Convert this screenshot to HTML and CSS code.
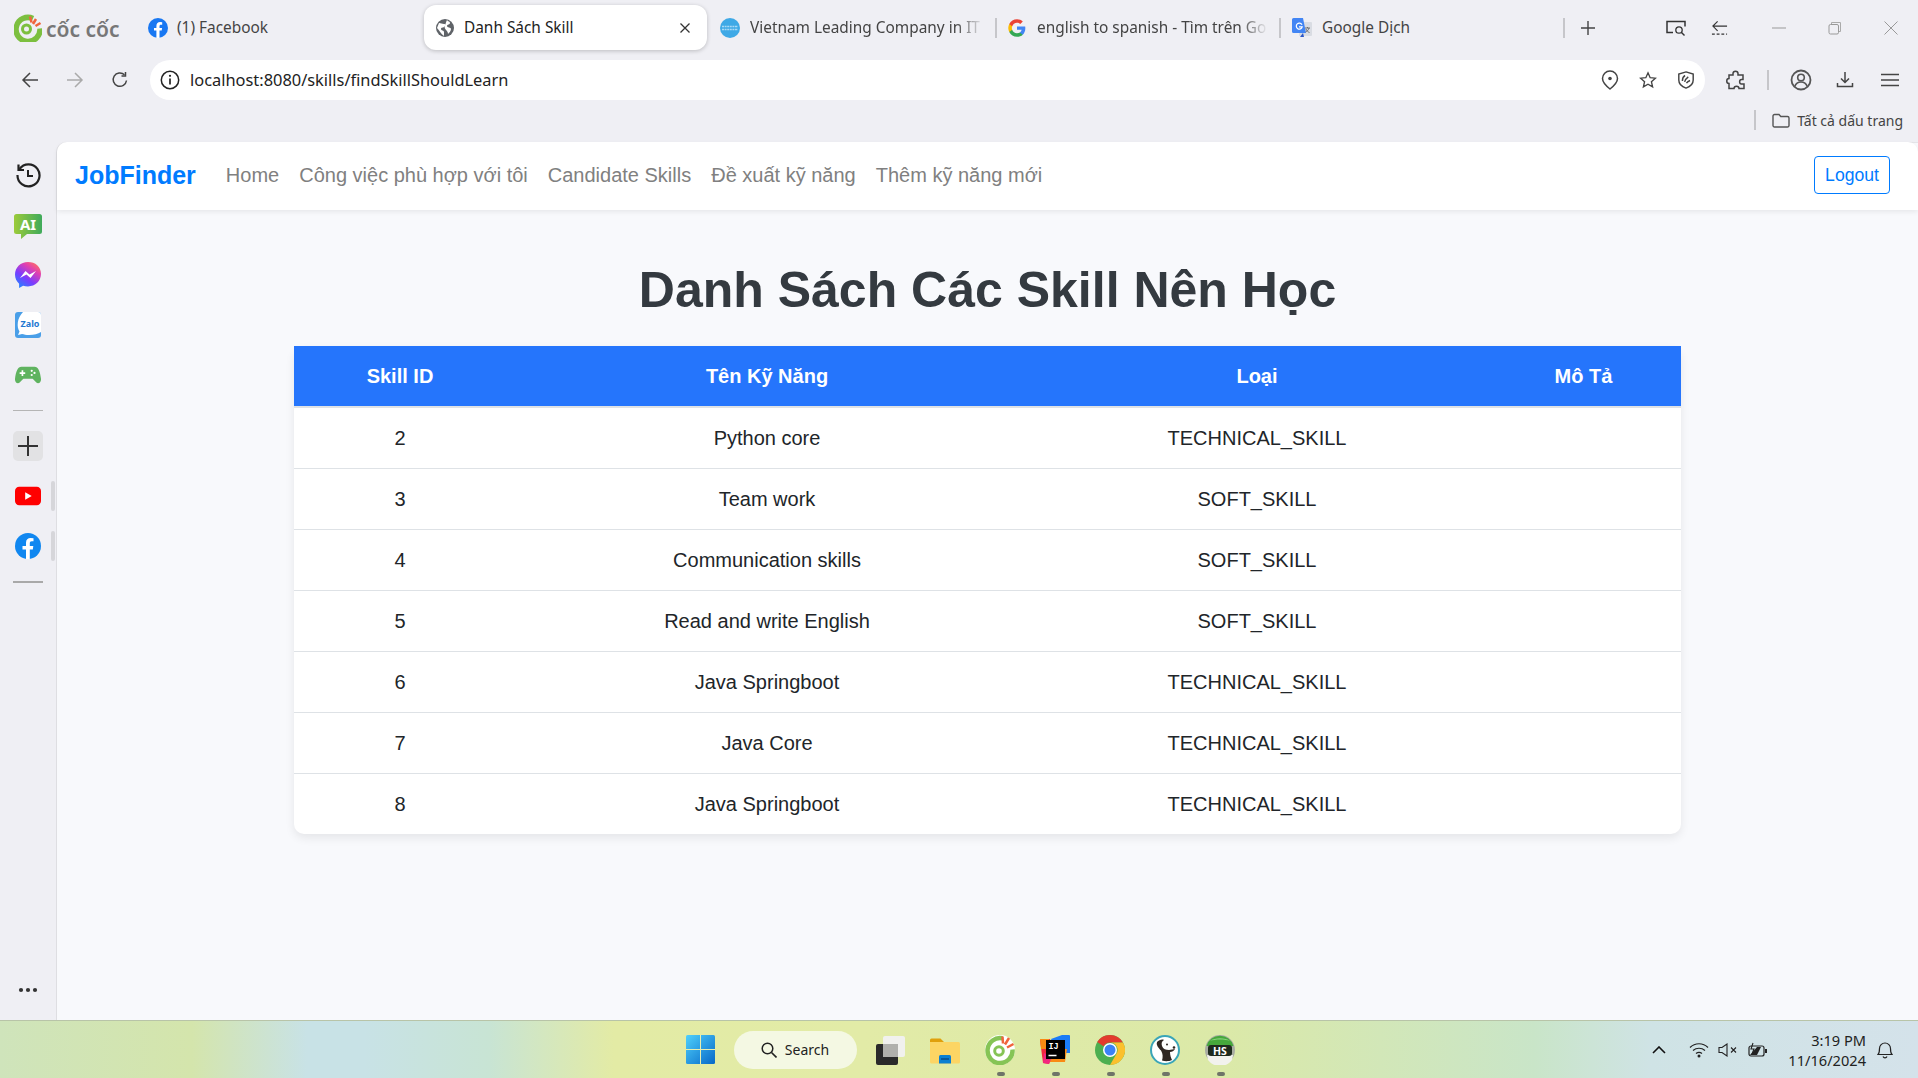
FILE: index.html
```html
<!DOCTYPE html>
<html lang="vi">
<head>
<meta charset="utf-8">
<title>Danh Sách Skill</title>
<link rel="stylesheet" href="styles.css">
</head>
<body>
<div class="screen">
  <header class="tabstrip">
    <div class="brandlogo">
      <svg class="logo-mark" viewBox="0 0 28 28"><path d="M19 4.500A12 12 0 1 0 26 14.500" fill="none" stroke="#7cbf3f" stroke-width="5.500"/><circle cx="12.500" cy="15" r="4" fill="none" stroke="#7cbf3f" stroke-width="3"/><path d="M16 2.500l1.500 6M22 5l-3 5M26.500 9l-5 3" stroke="#f0643c" stroke-width="2.500" fill="none"/></svg>
      <span class="logo-text">cốc cốc</span>
    </div>
    <div class="tab tab-first">
      <svg class="favicon" viewBox="0 0 20 20"><circle cx="10" cy="10" r="10" fill="#1877f2"/><path d="M8.400 20v-7.400H6V10h2.400V7.900c0-2.500 1.500-3.800 3.700-3.800l2.100.2v2.400h-1.200c-1.200 0-1.500.7-1.500 1.500V10h2.600l-.4 2.600h-2.200V20z" fill="#fff"/></svg>
      <span class="tab-title">(1) Facebook</span>
    </div>
    <div class="tab tab-active">
      <svg class="favicon" viewBox="0 0 20 20"><circle cx="10" cy="10" r="9" fill="#5f6368"/><path d="M4 5c2 0 3 1 5 1s1 2 0 3-3 0-3 2 3 1 3 3 0 3 0 4C6 16 4 12 2 10zM12 2c1 2 3 1 3 3s-3 1-3 3 4 1 4 3-2 4-3 5c0-2-1-3-2-4s-2-3-1-5 1-3 2-5z" fill="#fff"/></svg>
      <span class="tab-title">Danh Sách Skill</span>
      <svg class="tab-close" viewBox="0 0 12 12"><path d="M1.500 1.500l9 9M10.500 1.500l-9 9" stroke="#333" stroke-width="1.300"/></svg>
    </div>
    <div class="tab tab-vn">
      <svg class="favicon" viewBox="0 0 20 20"><circle cx="10" cy="10" r="10" fill="#3fa9e6"/><path d="M2 8.500h16M2 11.500h16" stroke="#a9d9f5" stroke-width="1.500" stroke-dasharray="2 .6"/></svg>
      <span class="tab-title tab-fade">Vietnam Leading Company in IT</span>
    </div>
    <i class="tab-sep"></i>
    <div class="tab tab-google">
      <svg class="favicon" viewBox="0 0 48 48"><path fill="#4285f4" d="M44 24.500c0-1.500-.1-2.900-.4-4.300H24v8.200h11.200c-.5 2.600-2 4.800-4.200 6.300v5.200h6.800c4-3.700 6.200-9.100 6.200-15.400z"/><path fill="#34a853" d="M24 45c5.700 0 10.400-1.900 13.800-5.100L31 34.700c-1.900 1.300-4.200 2-7 2-5.400 0-10-3.600-11.600-8.500H5.400v5.400C8.900 40.300 15.900 45 24 45z"/><path fill="#fbbc05" d="M12.400 28.200c-.4-1.300-.7-2.600-.7-4.200s.3-2.900.7-4.200v-5.400h-7C4 17.300 3 20.500 3 24s1 6.700 2.400 9.600z"/><path fill="#ea4335" d="M24 11.300c3 0 5.800 1 7.900 3.100l6-6C34.400 5.100 29.700 3 24 3 15.900 3 8.900 7.700 5.400 14.400l7 5.400c1.600-4.900 6.200-8.500 11.600-8.500z"/></svg>
      <span class="tab-title tab-fade">english to spanish - Tìm trên Go</span>
    </div>
    <i class="tab-sep"></i>
    <div class="tab tab-translate">
      <svg class="favicon" viewBox="0 0 20 20"><rect x="7" y="4" width="13" height="14" rx="1" fill="#d9dce3"/><path d="M1.500 0H11l3 15H1.500A1.500 1.500 0 0 1 0 13.500v-12A1.500 1.500 0 0 1 1.500 0z" fill="#4285f4"/><path d="M11 15l-3 4h4z" fill="#2a56c6"/><path d="M10 6.800a3 3 0 1 0 .2 2H7" fill="none" stroke="#fff" stroke-width="1.200"/><path d="M13 10h5M15.500 9v1M17 10c-.5 2-2 3.500-3.500 4M14 11c.5 1.500 2 3 3.500 3.500" stroke="#666" stroke-width=".9" fill="none"/></svg>
      <span class="tab-title">Google Dịch</span>
    </div>
    <i class="tab-sep"></i>
    <div class="strip-actions">
      <svg class="strip-plus" viewBox="0 0 16 16"><path d="M8 1v14M1 8h14" stroke="#444" stroke-width="1.400"/></svg>
      <svg class="strip-search" viewBox="0 0 22 16"><path d="M8 12.500H2V1.500h18v5" fill="none" stroke="#333" stroke-width="1.500"/><circle cx="14" cy="10" r="3.200" fill="none" stroke="#333" stroke-width="1.300"/><path d="M16.500 12.500l3 3" stroke="#333" stroke-width="1.400"/></svg>
      <svg class="strip-back" viewBox="0 0 18 16"><path d="M7 1L2 6l5 5M2 6h15" fill="none" stroke="#333" stroke-width="1.200"/><path d="M1 14.500h16" stroke="#333" stroke-width="1.200" stroke-dasharray="3 2"/></svg>
      <div class="winctl">
        <svg class="win-icon" viewBox="0 0 14 14"><path d="M0 7h14" stroke="#999" stroke-width="1"/></svg>
        <svg class="win-icon" viewBox="0 0 14 14"><path d="M3.500 3V1.500h9v9H11" fill="none" stroke="#aaa"/><rect x="1" y="3.500" width="9.500" height="9.500" rx="1.500" fill="none" stroke="#999"/></svg>
        <svg class="win-icon" viewBox="0 0 14 14"><path d="M.5.500l13 13M13.500.500l-13 13" stroke="#999" stroke-width="1"/></svg>
      </div>
    </div>
  </header>

  <div class="toolbar">
    <svg class="nav-icon" viewBox="0 0 18 18"><path d="M9 2L2 9l7 7M2 9h15" fill="none" stroke="#444" stroke-width="1.500"/></svg>
    <svg class="nav-icon" viewBox="0 0 18 18"><path d="M9 2l7 7-7 7M16 9H1" fill="none" stroke="#aaa" stroke-width="1.500"/></svg>
    <svg class="nav-icon" viewBox="0 0 18 18"><path d="M15.500 9.500A6.700 6.700 0 1 1 13.500 3.800" fill="none" stroke="#444" stroke-width="1.500"/><path d="M14.500 1v4h-4" fill="none" stroke="#444" stroke-width="1.500"/></svg>
    <div class="omnibox">
      <svg class="omni-info" viewBox="0 0 20 20"><circle cx="10" cy="10" r="8.700" fill="none" stroke="#222" stroke-width="1.500"/><path d="M10 8.500v6" stroke="#222" stroke-width="1.700"/><circle cx="10" cy="5.800" r="1.100" fill="#222"/></svg>
      <span class="omni-url">localhost:8080/skills/findSkillShouldLearn</span>
      <div class="omni-actions">
        <svg class="omni-icon" viewBox="0 0 18 20"><path d="M9 1a7.500 7.500 0 0 0-7.500 7.500C1.500 13 9 19 9 19s7.500-6 7.500-10.500A7.500 7.500 0 0 0 9 1z" fill="none" stroke="#444" stroke-width="1.500"/><circle cx="9" cy="8.500" r="1.800" fill="#444"/></svg>
        <svg class="omni-icon" viewBox="0 0 20 20"><path d="M10 2l2.400 5.400 5.800.6-4.400 3.900 1.300 5.800-5.100-3-5.100 3 1.300-5.800L1.800 8l5.800-.6z" fill="none" stroke="#444" stroke-width="1.500"/></svg>
        <svg class="omni-icon" viewBox="0 0 20 20"><path d="M10 1l8 2.500V10c0 4.500-3.500 7.500-8 9-4.500-1.500-8-4.500-8-9V3.500z" fill="none" stroke="#444" stroke-width="1.600"/><path d="M6 11c0-3 1-5 3-6M8.500 12c.5-2 2-4 4-5.500M10.500 13.500c1-1.500 2.500-2.500 4-3" fill="none" stroke="#444" stroke-width="1.600"/></svg>
      </div>
    </div>
    <svg class="tool-puzzle" viewBox="0 0 20 20"><path d="M7 3.500c0-3 5-3 5 0V5h5v4.500h-1.500c-2.500 0-2.500 4.500 0 4.500H18v4.500h-5c0-3-5-3-5 0H3v-5c-3 0-3-5 0-5V5h4z" fill="none" stroke="#444" stroke-width="1.500"/></svg>
    <i class="tool-sep"></i>
    <svg class="tool-user" viewBox="0 0 22 22"><circle cx="11" cy="11" r="9.500" fill="none" stroke="#555" stroke-width="1.800"/><circle cx="11" cy="8.500" r="3.300" fill="none" stroke="#555" stroke-width="1.600"/><path d="M4.800 17.500c1-3 3.300-4.500 6.200-4.500s5.200 1.500 6.200 4.500" fill="none" stroke="#555" stroke-width="1.600"/></svg>
    <svg class="tool-down" viewBox="0 0 18 18"><path d="M9 1v10M5 7.500l4 4 4-4" fill="none" stroke="#444" stroke-width="1.500"/><path d="M1.500 12v3.500h15V12" fill="none" stroke="#444" stroke-width="1.500"/></svg>
    <svg class="tool-menu" viewBox="0 0 18 14"><path d="M0 1.500h18M0 7h18M0 12.500h18" stroke="#444" stroke-width="1.500"/></svg>
  </div>

  <div class="bookmarks">
    <i class="bm-sep"></i>
    <svg class="bm-folder" viewBox="0 0 18 15"><path d="M1 3a1.500 1.500 0 0 1 1.500-1.500H7l1.800 2h6.700A1.500 1.500 0 0 1 17 5v7.500a1.500 1.500 0 0 1-1.500 1.500h-13A1.500 1.500 0 0 1 1 12.500z" fill="none" stroke="#555" stroke-width="1.400"/></svg>
    <span class="bm-label">Tất cả dấu trang</span>
  </div>

  <div class="workspace">
    <aside class="sidebar">
      <div class="side-item">
        <svg class="side-icon" viewBox="0 0 26 26"><path d="M4.500 7A11 11 0 1 1 2.500 13" fill="none" stroke="#222" stroke-width="2.200"/><path d="M3.500 2.500V8H9" fill="none" stroke="#222" stroke-width="2.200"/><path d="M13 8v6h5" fill="none" stroke="#222" stroke-width="2"/></svg>
      </div>
      <div class="side-item">
        <svg class="side-ai" viewBox="0 0 28 25"><defs><linearGradient id="gai" x1="0" x2="1"><stop offset="0" stop-color="#9ccb3b"/><stop offset="1" stop-color="#3faa5b"/></linearGradient></defs><path d="M2.500 0h23A2.500 2.500 0 0 1 28 2.500v15a2.500 2.500 0 0 1-2.500 2.500H13l-6 5v-5H2.500A2.500 2.500 0 0 1 0 17.500v-15A2.500 2.500 0 0 1 2.500 0z" fill="url(#gai)"/><text class="ai-text" x="14" y="15.500" text-anchor="middle">AI</text></svg>
      </div>
      <div class="side-item">
        <svg class="side-icon" viewBox="0 0 26 26"><defs><linearGradient id="gms" x1="0.100" y1="1" x2="0.800" y2="0"><stop offset="0" stop-color="#1a8cff"/><stop offset=".4" stop-color="#7a3cff"/><stop offset=".75" stop-color="#e040b0"/><stop offset="1" stop-color="#ff7060"/></linearGradient></defs><path d="M13 0C5.700 0 0 5.400 0 12.600c0 3.800 1.600 7 4.100 9.200V26l4-2.200c1.500.4 3.100.6 4.900.6 7.300 0 13-5.400 13-12.600S20.300 0 13 0z" fill="url(#gms)"/><path d="M5 16l5.500-7 4 3.500 6.500-3.500-5.500 7-4-3.500z" fill="#fff"/></svg>
      </div>
      <div class="side-item">
        <svg class="side-icon" viewBox="0 0 26 26"><rect width="26" height="26" rx="3" fill="#4a9fe8"/><path d="M8 0h15a3 3 0 0 1 3 3v17c-3 2-7 3-12 3-3 0-5-.5-7-1l-4 1 1.500-3.500C1.500 15 2 6 8 0z" fill="#fff"/><text class="zalo-text" x="15" y="14.500" text-anchor="middle">Zalo</text></svg>
      </div>
      <div class="side-item">
        <svg class="side-icon" viewBox="0 0 28 20"><path d="M7 1h14c4 0 6 5 7 13 .4 4-3 6-5 4l-4-4H9l-4 4c-2 2-5.400 0-5-4C1 6 3 1 7 1z" fill="#5fb35f"/><path d="M5 8h6M8 5v6" stroke="#fff" stroke-width="1.800"/><circle cx="18" cy="5.500" r="1.200" fill="#fff"/><circle cx="18" cy="10" r="1.200" fill="#fff"/><circle cx="21" cy="7.800" r="1.200" fill="#fff"/></svg>
      </div>
      <hr class="side-rule">
      <div class="side-add">
        <svg class="side-plus" viewBox="0 0 20 20"><path d="M10 0v20M0 10h20" stroke="#333" stroke-width="2"/></svg>
      </div>
      <div class="side-item side-marked">
        <svg class="side-icon" viewBox="0 0 28 20"><rect width="28" height="20" rx="4.500" fill="#f00"/><path d="M11 6l7 4-7 4z" fill="#fff"/></svg>
      </div>
      <div class="side-item side-marked">
        <svg class="side-icon" viewBox="0 0 26 26"><circle cx="13" cy="13" r="13" fill="#1087f0"/><path d="M11 26v-9.500H7.500V13H11V9.700C11 6.500 13 5 15.500 5l3 .2v3h-1.700c-1.500 0-2 .8-2 2V13h3.500l-.5 3.500h-3V26z" fill="#fff"/></svg>
      </div>
      <hr class="side-rule side-rule-b">
      <svg class="side-more" viewBox="0 0 20 6"><circle cx="3" cy="3" r="2.100" fill="#333"/><circle cx="10" cy="3" r="2.100" fill="#333"/><circle cx="17" cy="3" r="2.100" fill="#333"/></svg>
    </aside>

    <div class="page">
      <nav class="navbar">
        <a class="nav-brand">JobFinder</a>
        <a class="nav-link">Home</a>
        <a class="nav-link">Công việc phù hợp với tôi</a>
        <a class="nav-link">Candidate Skills</a>
        <a class="nav-link">Đề xuất kỹ năng</a>
        <a class="nav-link">Thêm kỹ năng mới</a>
        <button class="logout">Logout</button>
      </nav>
      <main class="content">
        <h1 class="title">Danh Sách Các Skill Nên Học</h1>
        <table class="skills">
          <colgroup><col class="c1"><col class="c2"><col class="c3"><col class="c4"></colgroup>
          <thead><tr><th>Skill ID</th><th>Tên Kỹ Năng</th><th>Loại</th><th>Mô Tả</th></tr></thead>
          <tbody>
            <tr><td>2</td><td>Python core</td><td>TECHNICAL_SKILL</td><td></td></tr>
            <tr><td>3</td><td>Team work</td><td>SOFT_SKILL</td><td></td></tr>
            <tr><td>4</td><td>Communication skills</td><td>SOFT_SKILL</td><td></td></tr>
            <tr><td>5</td><td>Read and write English</td><td>SOFT_SKILL</td><td></td></tr>
            <tr><td>6</td><td>Java Springboot</td><td>TECHNICAL_SKILL</td><td></td></tr>
            <tr><td>7</td><td>Java Core</td><td>TECHNICAL_SKILL</td><td></td></tr>
            <tr><td>8</td><td>Java Springboot</td><td>TECHNICAL_SKILL</td><td></td></tr>
          </tbody>
        </table>
      </main>
    </div>
  </div>

  <footer class="taskbar">
    <div class="tb-side"></div>
    <div class="tb-center">
      <svg class="tb-start" viewBox="0 0 29 29"><defs><linearGradient id="gwin" x1="0" y1="0" x2="1" y2="1"><stop offset="0" stop-color="#4fd0fb"/><stop offset="1" stop-color="#0668c8"/></linearGradient></defs><rect width="29" height="29" rx="1.500" fill="url(#gwin)"/><path d="M14.500 0v29M0 14.500h29" stroke="#e8edb0" stroke-width="1"/></svg>
      <div class="tb-search">
        <svg class="tb-lens" viewBox="0 0 16 16"><circle cx="6.500" cy="6.500" r="5.300" fill="none" stroke="#222" stroke-width="1.500"/><path d="M10.500 10.500l5 5" stroke="#222" stroke-width="1.600"/></svg>
        <span>Search</span>
      </div>
      <div class="tb-app">
        <svg class="tb-icon" viewBox="0 0 30 30"><rect x="1" y="9" width="22" height="21" rx="2" fill="#2a2a2a"/><rect x="8" y="1" width="22" height="21" rx="2" fill="#f1f1ee"/><rect x="8" y="9" width="15" height="13" fill="#b0b0ac"/></svg>
      </div>
      <div class="tb-app">
        <svg class="tb-icon" viewBox="0 0 30 30"><path d="M0 5a1.500 1.500 0 0 1 1.500-1.500h9L14 7h-14z" fill="#e0a00c"/><path d="M0 7h28.500A1.500 1.500 0 0 1 30 8.500V27a1.500 1.500 0 0 1-1.500 1.500h-27A1.500 1.500 0 0 1 0 27z" fill="#fcd564"/><path d="M9 21.500a1.500 1.500 0 0 1 1.500-1.500h9a1.500 1.500 0 0 1 1.500 1.500v7H9z" fill="#0b7fd1"/><path d="M11 24h8" stroke="#073f78" stroke-width="1.200"/></svg>
      </div>
      <div class="tb-app tb-running">
        <svg class="tb-icon" viewBox="0 0 30 30"><circle cx="15" cy="15" r="15" fill="#fff"/><path d="M17.500 3.300A12.500 12.500 0 1 0 27.500 14.500" fill="none" stroke="#86c455" stroke-width="4.500"/><circle cx="14" cy="16" r="4.300" fill="none" stroke="#86c455" stroke-width="3"/><path d="M17.500 1.500l.5 7M24 3l-4 6.500M28.500 9l-6.500 3.500" stroke="#f0643c" stroke-width="2.500" fill="none"/></svg>
      </div>
      <div class="tb-app tb-running">
        <svg class="tb-icon" viewBox="0 0 30 30"><path d="M0 5l10-1 3 12-4 13-6-1z" fill="#f2273f"/><path d="M0 4h9v10H1z" fill="#f98a13"/><path d="M11 4L22 0h7a1 1 0 0 1 1 1v17H17z" fill="#1a7cf7"/><path d="M16 14h11l-2 13H9z" fill="#f98a13"/><path d="M4 18l8 4-3 7-6-1z" fill="#f2277f"/><rect x="6" y="5" width="19" height="19" fill="#000"/><text class="ij-text" x="8.500" y="13.500">IJ</text><path d="M8.500 20.500h8" stroke="#fff" stroke-width="1.500"/></svg>
      </div>
      <div class="tb-app tb-running">
        <svg class="tb-icon" viewBox="0 0 30 30"><circle cx="15" cy="15" r="15" fill="#4caf50"/><path d="M15 0a15 15 0 0 1 13 7.500H15a7.500 7.500 0 0 0-6.500 3.800L2.200 7A15 15 0 0 1 15 0z" fill="#e33b2e"/><path d="M28 7.500A15 15 0 0 1 15 30l6.500-11.200A7.500 7.500 0 0 0 15 7.500z" fill="#fbc02d"/><circle cx="15" cy="15" r="7" fill="#fff"/><circle cx="15" cy="15" r="5.500" fill="#3b82f6"/></svg>
      </div>
      <div class="tb-app tb-running">
        <svg class="tb-icon" viewBox="0 0 30 30"><circle cx="15" cy="15" r="14" fill="#fff" stroke="#3aa5b8" stroke-width="2"/><path d="M7 7c2-2 5-3 7-2-2 1-3 3-2 6 1 3 4 4 7 4l6-1c-1 2-3 3-5 3 0 3 1 6 2 8-3 1.500-7 1.500-10 .5 1-3 1-7-1-10-3-3-5-6-4-8z" fill="#2f2723"/><circle cx="17" cy="9.500" r="1" fill="#2f2723"/><circle cx="24" cy="12.500" r="1.300" fill="#2f2723"/></svg>
      </div>
      <div class="tb-app tb-running">
        <svg class="tb-icon" viewBox="0 0 30 30"><circle cx="15" cy="15" r="15" fill="#a9aca3"/><path d="M1.500 11a14 14 0 0 1 27 0z" fill="#46a83c"/><path d="M5 6a12 6 0 0 1 20 0c-5-2-15-2-20 0z" fill="#8ad37e"/><path d="M3 25a15 15 0 0 0 24 0l1-5H2z" fill="#f2f2ee"/><rect x="3" y="10" width="24" height="11" rx="3" fill="#1f2a1e"/><text class="hs-text" x="15" y="19.500" text-anchor="middle">HS</text></svg>
      </div>
    </div>
    <div class="tb-side tb-tray">
      <svg class="tray-chev" viewBox="0 0 14 8"><path d="M1 7l6-6 6 6" fill="none" stroke="#111" stroke-width="1.600"/></svg>
      <svg class="tray-wifi" viewBox="0 0 20 16"><path d="M1 5.500c5-5 13-5 18 0M4 8.500c3.500-3 8.500-3 12 0M7 11.500c2-1.500 4-1.500 6 0" fill="none" stroke="#222" stroke-width="1.200"/><circle cx="10" cy="14" r="1.500" fill="#222"/></svg>
      <svg class="tray-vol" viewBox="0 0 20 14"><path d="M1 4.500h3l5-3.500v12l-5-3.500H1z" fill="none" stroke="#222" stroke-width="1.100"/><path d="M13 4.500l5 5M18 4.500l-5 5" stroke="#222" stroke-width="1.100"/></svg>
      <svg class="tray-batt" viewBox="0 0 20 16"><rect x="1" y="4" width="15" height="10" rx="2" fill="none" stroke="#222" stroke-width="1.200"/><path d="M2 13h7l4-8H9z" fill="#222"/><rect x="17" y="7" width="2" height="4" fill="#222"/><path d="M5 1L3 7h3L4 12" fill="none" stroke="#222" stroke-width="1.100"/></svg>
      <div class="tray-clock"><span>3:19 PM</span><span>11/16/2024</span></div>
      <svg class="tray-bell" viewBox="0 0 16 18"><path d="M1 13.500c1.500-1.500 1.500-3 1.500-6a5.500 5.500 0 0 1 11 0c0 3 0 4.500 1.500 6z" fill="none" stroke="#222" stroke-width="1.200"/><path d="M6 15.500a2.200 2.200 0 0 0 4 0" fill="none" stroke="#222" stroke-width="1.200"/></svg>
    </div>
  </footer>
</div>
</body>
</html>
```

FILE: styles.css
```css
* { box-sizing: border-box; }
html, body { margin: 0; height: 100%; overflow: hidden; }
body { background: #efeff4; font-family: "Noto Sans", sans-serif; color: #333; }
svg { display: block; flex: none; }
.screen { height: 1078px; display: flex; flex-direction: column; }

/* tab strip */
.tabstrip { height: 55px; flex: none; display: flex; align-items: center; padding: 0 0 0 14px; }
.brandlogo { width: 123px; flex: none; display: flex; align-items: center; gap: 4px; }
.logo-mark { width: 28px; height: 28px; }
.logo-text { font: 600 21px "Noto Sans", sans-serif; color: #777; white-space: nowrap; margin-top: 2px; }
.tab { width: 283px; height: 45px; flex: none; display: flex; align-items: center; gap: 9px; padding: 0 11px; font-size: 15.400px; color: #444; white-space: nowrap; overflow: hidden; }
.tab-first { padding-left: 11px; width: 287px; }
.tab-active { background: #fff; color: #222; border-radius: 12px; box-shadow: 0 1px 4px rgba(0,0,0,.22); margin-right: 2px; overflow: visible; }
.tab-vn { width: 286px; gap: 10px; }
.tab-google { width: 282px; padding-left: 10px; gap: 10px; }
.tab-translate { width: 282px; padding-left: 11px; gap: 10px; }
.favicon { width: 20px; height: 20px; }
.tab-title { min-width: 0; flex: 1; overflow: hidden; }
.tab-fade { -webkit-mask-image: linear-gradient(90deg, #000 88%, transparent 100%); mask-image: linear-gradient(90deg, #000 88%, transparent 100%); }
.tab-close { width: 12px; height: 12px; margin-right: 5px; }
.tab-sep { width: 2px; height: 20px; background: #c6c6ca; flex: none; }
.strip-actions { flex: 1; display: flex; align-items: center; padding-left: 15px; }
.strip-plus { width: 16px; height: 16px; }
.strip-search { width: 22px; height: 16px; margin-left: 69px; }
.strip-back { width: 17px; height: 16px; margin-left: 24px; }
.winctl { display: flex; align-items: center; gap: 42px; margin-left: 44px; }
.win-icon { width: 14px; height: 14px; }

/* toolbar */
.toolbar { height: 50px; flex: none; display: flex; align-items: center; padding: 0 0 0 21px; }
.nav-icon { width: 18px; height: 18px; margin-right: 27px; }
.nav-icon:nth-child(3) { margin-right: 21px; }
.omnibox { width: 1555px; height: 40px; flex: none; background: #fff; border-radius: 20px; display: flex; align-items: center; padding: 0 10px 0 10px; }
.omni-info { width: 20px; height: 20px; }
.omni-url { font-size: 16.400px; color: #222; margin: -2px 0 0 10px; white-space: nowrap; }
.omni-actions { margin-left: auto; display: flex; align-items: center; gap: 20px; }
.omni-icon { width: 18px; height: 20px; }
.tool-puzzle { width: 20px; height: 20px; margin-left: 21px; }
.tool-sep { width: 2px; height: 20px; background: #c6c6ca; margin-left: 21px; flex: none; }
.tool-user { width: 22px; height: 22px; margin-left: 21px; }
.tool-down { width: 18px; height: 18px; margin-left: 24px; }
.tool-menu { width: 18px; height: 14px; margin-left: 27px; }

/* bookmarks */
.bookmarks { height: 37px; flex: none; display: flex; align-items: center; justify-content: flex-end; padding: 0 15px 7px 0; }
.bm-sep { width: 2px; height: 20px; background: #c6c6ca; margin-right: 16px; }
.bm-folder { width: 18px; height: 15px; margin-right: 7px; }
.bm-label { font-size: 14px; color: #444; white-space: nowrap; }

/* workspace */
.workspace { flex: 1; min-height: 0; display: flex; }
.sidebar { width: 56px; flex: none; display: flex; flex-direction: column; align-items: center; padding: 8px 0 0; position: relative; }
.side-item { width: 56px; height: 50px; flex: none; display: flex; align-items: center; justify-content: center; position: relative; }
.side-icon { width: 26px; height: 26px; }
.side-ai { width: 28px; height: 25px; margin-top: 2px; }
.side-marked::after { content: ""; position: absolute; right: 1px; top: 10px; width: 4px; height: 30px; border-radius: 2px; background: #d6d6da; }
.side-rule { width: 30px; height: 1px; flex: none; background: #b5b5b5; border: 0; margin: 10px 0 20px; }
.side-rule-b { background: #a9a9a9; height: 2px; margin: 10px 0 0; }
.side-add { width: 30px; height: 30px; flex: none; background: #e2e2e4; border-radius: 5px; display: flex; align-items: center; justify-content: center; margin-bottom: 10px; }
.side-plus { width: 20px; height: 20px; }
.side-more { width: 20px; height: 6px; margin: auto 0 27px; }
.ai-text { font: 700 15px "Noto Sans", sans-serif; fill: #fff; }
.zalo-text { font: 700 9px "Noto Sans", sans-serif; fill: #1f78d1; }

/* page */
.page { flex: 1; min-width: 0; display: flex; flex-direction: column; background: #f8f9fc; border-top-left-radius: 10px; border-left: 1px solid #dedee2; box-shadow: inset 0 1px 0 #e4e4e8; }
.navbar { height: 68px; flex: none; background: #fff; border-top-left-radius: 10px; border-top-right-radius: 10px; display: flex; align-items: center; padding: 0 28px 2px 18px; box-shadow: 0 2px 5px rgba(0,0,0,.07); font-family: "Liberation Sans", Arial, sans-serif; position: relative; }
.nav-brand { font-size: 25px; font-weight: 700; color: #007bff; margin-right: 20px; }
.nav-link { font-size: 20px; color: #808080; padding: 0 10px; white-space: nowrap; }
.logout { margin-left: auto; width: 76px; height: 38px; padding: 0; border: 1px solid #007bff; border-radius: 4px; background: #fff; color: #007bff; font: 17.600px "Liberation Sans", Arial, sans-serif; }
.content { flex: 1; font-family: "Liberation Sans", Arial, sans-serif; display: flex; flex-direction: column; align-items: center; }
.title { margin: 51px 0 0; height: 85px; font-size: 50px; line-height: 58px; font-weight: 700; color: #343a40; text-align: center; }
.skills { width: 1387px; table-layout: fixed; border-collapse: separate; border-spacing: 0; background: #fff; border-radius: 10px; box-shadow: 0 4px 10px rgba(0,0,0,.08); font-size: 20px; color: #212529; }
.c1 { width: 212px; }
.c2 { width: 522px; }
.c3 { width: 458px; }
.c4 { width: 195px; }
.skills th { height: 62px; background: #2575fc; color: #fff; font-weight: 700; text-align: center; padding: 0; border-bottom: 2px solid #dee2e6; }
.skills td { height: 61px; text-align: center; padding: 0; border-bottom: 1px solid #dee2e6; }
.skills tbody tr:last-child td { border-bottom: 0; height: 60px; }
.skills tbody tr:last-child td:first-child { border-bottom-left-radius: 10px; }
.skills tbody tr:last-child td:last-child { border-bottom-right-radius: 10px; }

/* taskbar */
.taskbar { height: 58px; flex: none; display: flex; align-items: center; background: linear-gradient(90deg, #cfe4bb 0%, #d4e5ac 10%, #c8e2e6 16%, #c8e2e6 19%, #c8e4d4 25.500%, #e3eba5 32%, #e2eba7 45%, #dbe9a8 64%, #c9e5c8 80%, #cfe3e5 86%, #d4e2ea 100%); border-top: 1px solid #b8c4a8; }
.tb-side { flex: 1; display: flex; align-items: center; }
.tb-center { display: flex; align-items: center; margin-left: 40px; }
.tb-start { width: 29px; height: 29px; margin-right: 19px; }
.tb-search { width: 123px; height: 38px; border-radius: 19px; background: #f4f8e3; display: flex; align-items: center; justify-content: center; gap: 8px; font-size: 14px; color: #222; margin-right: 6px; }
.tb-lens { width: 16px; height: 16px; }
.tb-app { width: 55px; height: 57px; display: flex; align-items: center; justify-content: center; position: relative; }
.tb-icon { width: 30px; height: 30px; }
.tb-running::after { content: ""; position: absolute; bottom: 2px; left: 24px; width: 8px; height: 4px; border-radius: 2px; background: #6f7468; }
.ij-text { font: 700 8.500px "Liberation Mono", monospace; fill: #fff; }
.hs-text { font: 700 10.500px "Noto Sans", sans-serif; fill: #fff; }
.tb-tray { justify-content: flex-end; padding-right: 25px; }
.tray-chev { width: 14px; height: 8px; margin-right: 23px; }
.tray-wifi { width: 20px; height: 16px; margin-right: 9px; }
.tray-vol { width: 20px; height: 14px; margin-right: 10px; }
.tray-batt { width: 20px; height: 16px; margin-right: 20px; }
.tray-clock { display: flex; flex-direction: column; align-items: flex-end; font-size: 14.600px; line-height: 20px; color: #222; margin-right: 11px; white-space: nowrap; }
.tray-bell { width: 16px; height: 18px; }
```
